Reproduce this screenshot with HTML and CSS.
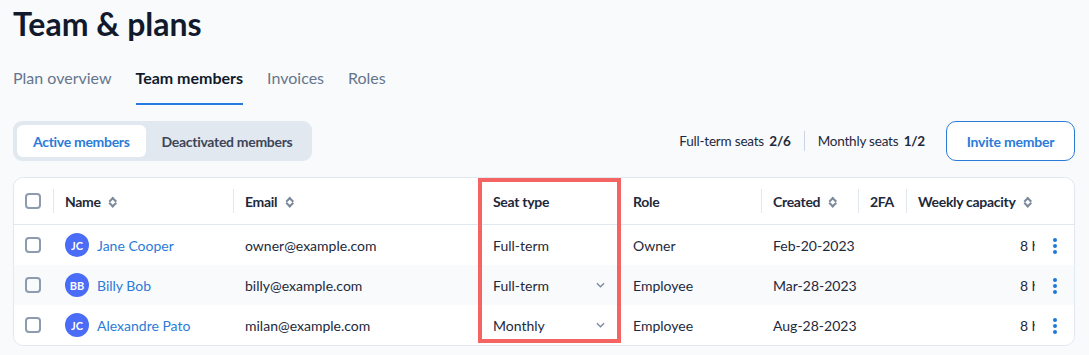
FILE: index.html
```html
<!DOCTYPE html>
<html lang="en">
<head>
    <meta charset="UTF-8">
    <meta name="viewport" content="width=device-width, initial-scale=1.0">
    <title>Team &amp; plans</title>
    <link rel="stylesheet" href="styles.css">
</head>
<body>
    <main class="page">
        <h1 class="page-title">Team &amp; plans</h1>

        <nav class="tabs">
            <a class="tab">Plan overview</a>
            <a class="tab tab-active">Team members</a>
            <a class="tab">Invoices</a>
            <a class="tab">Roles</a>
        </nav>

        <div class="toolbar">
            <div class="segmented">
                <button class="segment segment-active">Active members</button>
                <button class="segment">Deactivated members</button>
            </div>
            <div class="toolbar-right">
                <div class="seats">
                    <span class="seat-count">Full-term seats <b>2/6</b></span>
                    <span class="seat-divider"></span>
                    <span class="seat-count">Monthly seats <b>1/2</b></span>
                </div>
                <button class="btn-outline">Invite member</button>
            </div>
        </div>

        <div class="table-card">
            <div class="table-scroll">
                <table class="members">
                    <colgroup>
                        <col style="width: 39px">
                        <col style="width: 180px">
                        <col style="width: 248px">
                        <col style="width: 140px">
                        <col style="width: 140px">
                        <col style="width: 97px">
                        <col style="width: 48px">
                        <col style="width: 146px">
                        <col style="width: 40px">
                    </colgroup>
                    <thead>
                        <tr>
                            <th class="cell-check"><span class="checkbox"></span></th>
                            <th class="sep">Name <span class="sort"></span></th>
                            <th class="sep">Email <span class="sort"></span></th>
                            <th>Seat type</th>
                            <th>Role</th>
                            <th class="sep">Created <span class="sort"></span></th>
                            <th class="sep">2FA</th>
                            <th class="sep">Weekly capacity <span class="sort"></span></th>
                            <th class="cell-actions"></th>
                        </tr>
                    </thead>
                    <tbody>
                        <tr>
                            <td class="cell-check"><span class="checkbox"></span></td>
                            <td><div class="member"><span class="avatar">JC</span><a class="member-link">Jane Cooper</a></div></td>
                            <td>owner@example.com</td>
                            <td><div class="seat-select">Full-term</div></td>
                            <td>Owner</td>
                            <td>Feb-20-2023</td>
                            <td></td>
                            <td class="num">8 h</td>
                            <td class="cell-actions"><span class="kebab"><i></i><i></i><i></i></span></td>
                        </tr>
                        <tr class="row-alt">
                            <td class="cell-check"><span class="checkbox"></span></td>
                            <td><div class="member"><span class="avatar">BB</span><a class="member-link">Billy Bob</a></div></td>
                            <td>billy@example.com</td>
                            <td><div class="seat-select">Full-term <svg class="chevron" viewBox="0 0 10 6"><path d="M1 1l4 4 4-4"/></svg></div></td>
                            <td>Employee</td>
                            <td>Mar-28-2023</td>
                            <td></td>
                            <td class="num">8 h</td>
                            <td class="cell-actions"><span class="kebab"><i></i><i></i><i></i></span></td>
                        </tr>
                        <tr>
                            <td class="cell-check"><span class="checkbox"></span></td>
                            <td><div class="member"><span class="avatar">JC</span><a class="member-link">Alexandre Pato</a></div></td>
                            <td>milan@example.com</td>
                            <td><div class="seat-select">Monthly <svg class="chevron" viewBox="0 0 10 6"><path d="M1 1l4 4 4-4"/></svg></div></td>
                            <td>Employee</td>
                            <td>Aug-28-2023</td>
                            <td></td>
                            <td class="num">8 h</td>
                            <td class="cell-actions"><span class="kebab"><i></i><i></i><i></i></span></td>
                        </tr>
                    </tbody>
                </table>
            </div>
            <div class="highlight"></div>
        </div>
    </main>
</body>
</html>
```

FILE: styles.css
```css
:root {
    --font-main: 'Lato', 'Liberation Sans', sans-serif;
    --color-text: #1e293b;
    --color-muted: #64748b;
    --color-blue: #2b7bd9;
    --color-border: #e2e8f0;
    --color-bg: #f8fafc;
    --color-red: #f46462;
}

body {
    margin: 0;
    font-family: var(--font-main);
    background: var(--color-bg);
    color: var(--color-text);
    overflow: hidden;
}

.page {
    padding: 4px 14px 0 13px;
}

.page-title {
    margin: 0;
    font-size: 32px;
    line-height: 40px;
    font-weight: 700;
    color: #111a2c;
}

/* tabs */
.tabs {
    display: flex;
    gap: 24px;
    margin-top: 24px;
}

.tab {
    font-size: 16px;
    line-height: 20px;
    padding-bottom: 15px;
    border-bottom: 2px solid transparent;
    color: #66758b;
}

.tab-active {
    color: #111a2c;
    font-weight: 700;
    border-bottom-color: #2579df;
}

/* toolbar */
.toolbar {
    display: flex;
    justify-content: space-between;
    align-items: center;
    margin-top: 16px;
}

.segmented {
    display: flex;
    padding: 4px;
    background: #e2e8f0;
    border-radius: 9px;
}

.segment {
    font-family: var(--font-main);
    font-size: 14px;
    font-weight: 700;
    letter-spacing: -0.3px;
    height: 32px;
    padding: 0 16px;
    border: 0;
    border-radius: 6px;
    background: transparent;
    color: #3c4658;
}

.segment-active {
    background: #fff;
    color: var(--color-blue);
}

.toolbar-right {
    display: flex;
    align-items: center;
    gap: 21px;
}

.seats {
    display: flex;
    align-items: center;
    gap: 13px;
    font-size: 13.5px;
    letter-spacing: -0.2px;
    color: var(--color-text);
}

.seat-count b { margin-left: 2px; }

.seat-divider {
    width: 1px;
    height: 20px;
    background: #cbd5e1;
}

.btn-outline {
    font-family: var(--font-main);
    font-size: 14px;
    font-weight: 700;
    letter-spacing: -0.2px;
    height: 40px;
    width: 129px;
    border: 1.5px solid var(--color-blue);
    border-radius: 10px;
    background: #fff;
    color: var(--color-blue);
}

/* table */
.table-card {
    position: relative;
    margin-top: 16px;
    background: #fff;
    border: 1px solid var(--color-border);
    border-radius: 10px;
}

.table-scroll {
    overflow: hidden;
    border-radius: 10px;
}

.members {
    table-layout: fixed;
    width: 1078px;
    border-collapse: collapse;
    font-size: 14px;
}

.members th {
    height: 46px;
    padding: 0 0 0 12px;
    text-align: left;
    font-weight: 700;
    letter-spacing: -0.3px;
    color: var(--color-text);
    border-bottom: 1px solid var(--color-border);
    white-space: nowrap;
    background: #fff;
}

.members th.sep {
    background-image: linear-gradient(var(--color-border), var(--color-border));
    background-size: 1px 24px;
    background-position: 0 center;
    background-repeat: no-repeat;
}

.members td {
    height: 40px;
    padding: 0 0 0 12px;
    white-space: nowrap;
    overflow: hidden;
}

.row-alt td { background: #f8fafc; }
.members tr:not(.row-alt) td { background: #fff; }

.members .cell-check {
    padding: 0 0 0 11px;
}

.checkbox {
    display: block;
    width: 12px;
    height: 12px;
    border: 2px solid #8d9bb0;
    border-radius: 4px;
}

/* up/down sort arrows */
.sort {
    position: relative;
    display: inline-block;
    width: 8px;
    height: 11px;
    margin-left: 5px;
    vertical-align: -1px;
}

.sort::before,
.sort::after {
    content: "";
    position: absolute;
    left: 1.5px;
    width: 3.5px;
    height: 3.5px;
    border: solid #7b889c;
    border-width: 2px 0 0 2px;
}

.sort::before { top: 1.5px; transform: rotate(45deg); }
.sort::after { bottom: 1.5px; transform: rotate(225deg); }

.member {
    display: flex;
    align-items: center;
    gap: 8px;
}

.avatar {
    display: flex;
    align-items: center;
    justify-content: center;
    width: 24px;
    height: 24px;
    border-radius: 50%;
    background: #4a6cf6;
    color: #fff;
    font-size: 11px;
    font-weight: 700;
}

.member-link { color: var(--color-blue); }

.seat-select {
    display: flex;
    align-items: center;
    justify-content: space-between;
    padding-right: 16px;
}

.chevron {
    width: 9px;
    height: 6px;
    fill: none;
    stroke: #7b889c;
    stroke-width: 1.4;
}

.members td.num {
    text-align: right;
    padding-right: 12px;
}

.members .cell-actions {
    position: sticky;
    right: 0;
    padding: 0;
    border-left: 1px solid var(--color-border);
    text-align: center;
}

.kebab {
    display: inline-flex;
    flex-direction: column;
    gap: 2px;
    vertical-align: middle;
    margin-left: 2px;
}

.kebab i {
    width: 4px;
    height: 4px;
    border-radius: 50%;
    background: #2177d9;
}

/* annotation around the seat type column */
.highlight {
    position: absolute;
    left: 464px;
    top: 0;
    width: 135px;
    height: 157px;
    border: 4px solid var(--color-red);
    pointer-events: none;
}
```
